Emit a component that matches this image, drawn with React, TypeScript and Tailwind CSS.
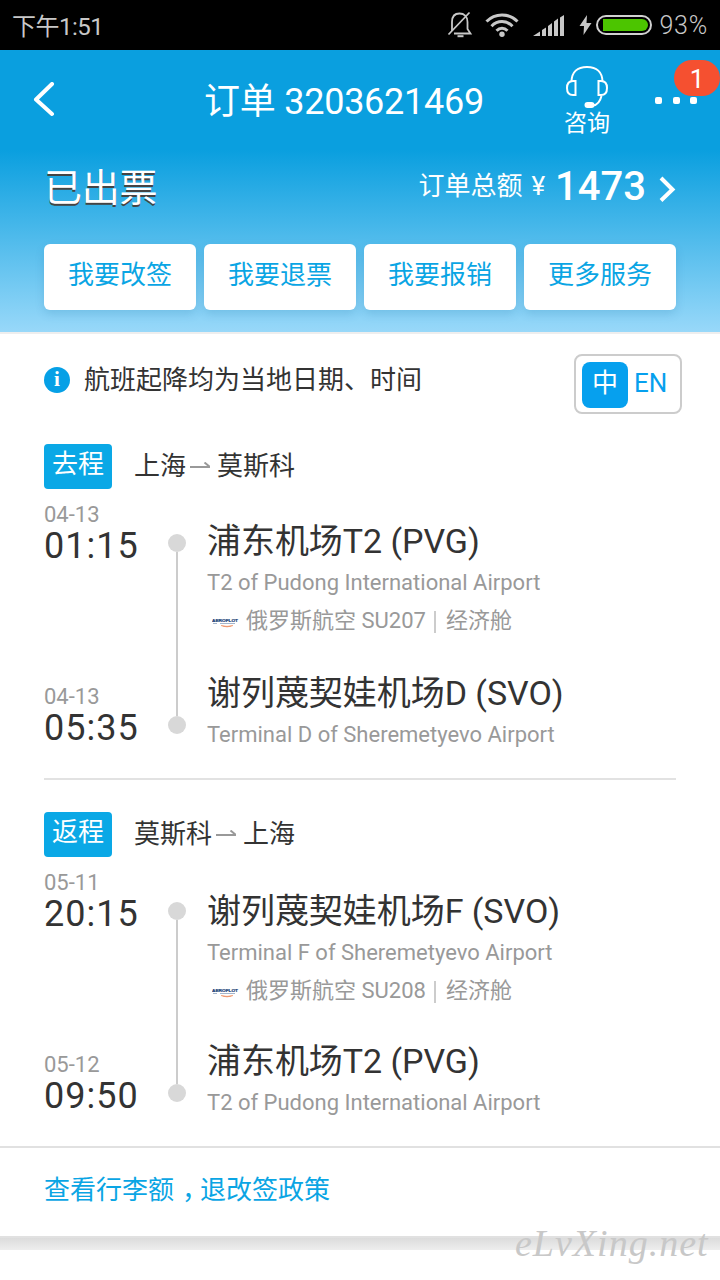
import clsx from "clsx";

const cjk = "font-['Roboto','Noto_Sans_CJK_SC',sans-serif]";

const actions = ["我要改签", "我要退票", "我要报销", "更多服务"];

const legs = [
  {
    tag: "去程",
    from: "上海",
    to: "莫斯科",
    flight: "俄罗斯航空 SU207",
    cabin: "经济舱",
    depart: { date: "04-13", time: "01:15", name: "浦东机场T2 (PVG)", en: "T2 of Pudong International Airport" },
    arrive: { date: "04-13", time: "05:35", name: "谢列蔑契娃机场D (SVO)", en: "Terminal D of Sheremetyevo Airport" },
    detailsClass: "pt-[18px]",
    gapClass: "h-8",
  },
  {
    tag: "返程",
    from: "莫斯科",
    to: "上海",
    flight: "俄罗斯航空 SU208",
    cabin: "经济舱",
    depart: { date: "05-11", time: "20:15", name: "谢列蔑契娃机场F (SVO)", en: "Terminal F of Sheremetyevo Airport" },
    arrive: { date: "05-12", time: "09:50", name: "浦东机场T2 (PVG)", en: "T2 of Pudong International Airport" },
    detailsClass: "pt-5",
    gapClass: "h-[30px]",
  },
];

type Stop = (typeof legs)[number]["depart"];

const StatusBar = () => (
  <div className="flex h-[50px] items-center bg-black pl-3 pr-3 text-[#c8c8c8]">
    <span className="pt-[3px] text-2xl leading-none tracking-[-0.5px]">下午1:51</span>
    <svg className="ml-auto" width="26" height="28" viewBox="0 0 26 28" fill="none" stroke="currentColor" strokeWidth="1.8">
      <path d="M5 20V11C5 5.500 8 2.500 12.500 2.500S20.500 5.500 20.500 11V18L23.500 22.500H7" />
      <path d="M22.500 1.500 1.500 23.500" />
      <path d="M10.500 25.200H16.500" strokeWidth="2" />
    </svg>
    <svg className="ml-3" width="34" height="26" viewBox="0 0 34 26" fill="none" stroke="currentColor" strokeWidth="3">
      <path d="M1.500 9.500C10 .8 24 .8 32.500 9.500" />
      <path d="M6.500 14.200C12.500 8 21.500 8 27.500 14.200" />
      <path d="M11.500 18.800C14.800 15.500 19.200 15.500 22.500 18.800" />
      <circle cx="17" cy="22.300" r="2.700" fill="currentColor" stroke="none" />
    </svg>
    <svg className="ml-3.5" width="32" height="22" viewBox="0 0 32 22" fill="currentColor">
      <path d="M0 22 7 17.500V22ZM9 16 13 13.500V22H9ZM15 12 19 9V22H15ZM21 7.500 25 4.500V22H21ZM27 3.500 31 1V22H27Z" />
    </svg>
    <svg className="ml-3.5" width="13" height="20" viewBox="0 0 13 20" fill="currentColor">
      <path d="M8 0 .5 11H5L4.500 20 12.500 8H7.500Z" />
    </svg>
    <div className="ml-1 h-5 w-14 rounded-full border-2 border-[#d0d0d0] p-0.5">
      <div className="ml-[3px] h-full rounded-l-[3px] rounded-r-full bg-[#4cc500]" />
    </div>
    <span className="ml-[7px] pt-px text-[25px] font-light leading-none tracking-[0.8px]">93%</span>
  </div>
);

const NavBar = () => (
  <div className="relative flex h-[100px] items-start text-white">
    <svg className="ml-8 mt-8" width="24" height="36" viewBox="0 0 24 36" fill="none" stroke="currentColor" strokeWidth="4" strokeLinecap="round" strokeLinejoin="round">
      <path d="M20 2 4 17.500 20 32" />
    </svg>
    <h1 className="ml-[148px] mt-[27px] w-[282px] text-4xl leading-[50px] tracking-[-0.25px] whitespace-nowrap">订单 3203621469</h1>
    <div className="ml-[77px] mt-[15px] flex w-12 flex-col items-center">
      <svg width="44" height="43" viewBox="0 0 44 43" fill="none" stroke="currentColor" strokeWidth="2">
        <path d="M6.500 17C6.500 7 12.500 2 22 2S37.500 7 37.500 17" />
        <path d="M10.500 16V30H8C4 30 2 27 2 23S4 16 8 16Z" />
        <path d="M33.500 16V30H36C40 30 42 27 42 23S40 16 36 16Z" />
        <path d="M36.500 31C35 37 32 40 28 40.500" />
        <rect x="19.500" y="37" width="10" height="6" rx="3" fill="currentColor" stroke="none" />
      </svg>
      <span className="pt-px text-[23px] leading-[30px] whitespace-nowrap">咨询</span>
    </div>
    <div className="ml-11 mt-[47px] flex gap-[10.5px]">
      <i className="size-[7px] rounded-xs bg-white" />
      <i className="size-[7px] rounded-xs bg-white" />
      <i className="size-[7px] rounded-xs bg-white" />
    </div>
    <span className="absolute right-0 top-2.5 h-9 w-[46px] rounded-full bg-[#f55030] text-center text-[26px] leading-[38px]">1</span>
  </div>
);

const OrderHeader = () => (
  <div className="h-[182px] bg-linear-to-b/srgb from-[#0a9fdf] to-[#98d8f9] px-11 text-white">
    <div className="flex h-[94px] items-start whitespace-nowrap">
      <h2 className="mt-[13px] text-[38px] leading-[50px] tracking-[-0.3px] [text-shadow:0_2px_0_#444]">已出票</h2>
      <span className="ml-auto mt-[17px] text-[26px] leading-[38px]">订单总额</span>
      <span className="ml-[9px] mt-[17px] text-[26px] leading-[38px]">¥</span>
      <span className="ml-2.5 mt-[13px] text-[40px] font-medium leading-[48px]">1473</span>
      <svg className="ml-3 mt-[26px]" width="18" height="26" viewBox="0 0 18 26" fill="none" stroke="currentColor" strokeWidth="4">
        <path d="M3 2 14.500 13.500 3 24.500" />
      </svg>
    </div>
    <div className="grid grid-cols-4 gap-2">
      {actions.map((action) => (
        <button key={action} className="h-[66px] rounded-md bg-white pb-1 text-[26px] text-[#0aa5e4] shadow-[0_4px_10px_rgba(0,90,140,0.15)]">
          {action}
        </button>
      ))}
    </div>
  </div>
);

const Notice = () => (
  <div className="flex h-[110px] items-start pl-11 pr-[38px] pt-5">
    <span className="mt-[13px] size-[26px] rounded-full bg-[#06a0e6] text-center font-['Liberation_Serif',serif] text-[21px] leading-[25px] font-bold text-white">i</span>
    <p className="ml-3.5 text-[26px] leading-[52px] text-[#333]">航班起降均为当地日期、时间</p>
    <div className="ml-auto flex h-[60px] w-[108px] rounded-lg border-2 border-[#ccc] p-1.5 text-[26px] text-[#06a0ee]">
      <span className="size-[46px] rounded-lg bg-[#06a0ee] text-center leading-[42px] text-white">中</span>
      <span className="ml-1.5 leading-[43px]">EN</span>
    </div>
  </div>
);

const StopTime = ({ stop }: { stop: Stop }) => (
  <div>
    <div className="h-7 text-[22px] leading-[30px] text-[#999]">{stop.date}</div>
    <div className="h-[34px] text-4xl leading-9 tracking-[1px] text-[#333]">{stop.time}</div>
  </div>
);

const StopName = ({ stop }: { stop: Stop }) => (
  <div className="whitespace-nowrap">
    <div className="h-11 text-[34px] leading-[46px] tracking-[-0.05px] text-[#333]">{stop.name}</div>
    <div className="h-10 text-[22px] leading-[42px] text-[#999]">{stop.en}</div>
  </div>
);

const AirlineLogo = () => (
  <svg className="ml-[5px] mt-[5px]" width="27" height="12" viewBox="0 0 27 12">
    <text x="0" y="4.500" fontSize="4.200" fontWeight="bold" textLength="26" lengthAdjust="spacingAndGlyphs" fill="#173c75" stroke="#173c75" strokeWidth=".2" fontFamily="Liberation Sans, sans-serif">AEROFLOT</text>
    <path d="M1 6.500H5M8 6.500H23" stroke="#a3b5cc" strokeWidth="1" />
    <path d="M9 8.500Q15 11.500 21 8.500Q15 10 9 8.500Z" fill="#ee7b4d" stroke="#ee9b70" strokeWidth=".6" />
  </svg>
);

const Leg = ({ leg }: { leg: (typeof legs)[number] }) => (
  <section>
    <div className="flex h-14 items-start text-[26px]">
      <span className="h-[45px] w-[68px] rounded-[4px] bg-[#0aa8e6] text-center leading-10 text-white">{leg.tag}</span>
      <div className="ml-[22px] flex items-center leading-[44px] text-[#333]">
        {leg.from}
        <svg className="ml-1 mr-[7px]" width="20" height="8" viewBox="0 0 20 8" fill="none" stroke="#999" strokeWidth="2">
          <path d="M0 5H20L14.500 .5" />
        </svg>
        {leg.to}
      </div>
    </div>
    <div className="flex h-[278px] items-start">
      <div className="flex w-[124px] flex-col gap-[120px]">
        <StopTime stop={leg.depart} />
        <StopTime stop={leg.arrive} />
      </div>
      <div className="flex w-[18px] flex-col items-center pt-[34px]">
        <i className="size-[18px] rounded-full bg-[#d8d8d8]" />
        <i className="h-[164px] w-0.5 bg-[#ccc]" />
        <i className="size-[18px] rounded-full bg-[#d8d8d8]" />
      </div>
      <div className={clsx("ml-[21px]", leg.detailsClass)}>
        <StopName stop={leg.depart} />
        <div className="flex h-9 items-center text-[22px] text-[#999]">
          <AirlineLogo />
          <span className="ml-[7px]">{leg.flight}</span>
          <i className="ml-2 mt-1 h-[22px] w-0.5 bg-[#ccc]" />
          <span className="ml-2.5">{leg.cabin}</span>
        </div>
        <div className={leg.gapClass} />
        <StopName stop={leg.arrive} />
      </div>
    </div>
  </section>
);

const App = () => {
  return (
    <div className={clsx("relative h-[1280px] w-[720px] overflow-hidden bg-white", cjk)}>
      <StatusBar />
      <div className="bg-[#0a9fdf]">
        <NavBar />
        <OrderHeader />
      </div>
      <main className="h-[814px] border-t-2 border-[#eee]">
        <Notice />
        <div className="px-11">
          <Leg leg={legs[0]} />
          <div className="mb-8 h-0.5 bg-[#e2e2e2]" />
          <Leg leg={legs[1]} />
        </div>
      </main>
      <div className="h-[92px] border-y-2 border-[#e1e1e1] pl-11 text-[26px] leading-[84px] text-[#0aa5e4]">
        查看行李额<span className="ml-2 mr-[5px] [font-feature-settings:'halt']">，</span>退改签政策
      </div>
      <div className="h-3 bg-linear-to-b from-[#dcdcdc] to-[#eee]" />
      <span className="absolute left-[515px] top-[1221px] font-['Liberation_Serif',serif] text-[38px] italic leading-[44px] tracking-[1px] text-[#c8c8c8]">eLvXing.net</span>
    </div>
  );
};

export default App;
